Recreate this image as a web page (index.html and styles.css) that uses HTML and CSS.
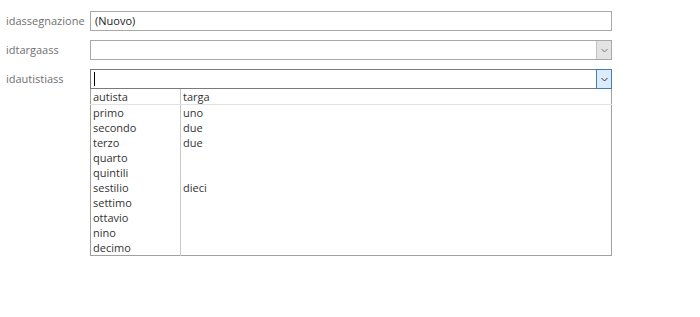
FILE: index.html
```html
<!DOCTYPE html>
<html lang="it">
<head>
    <meta charset="UTF-8">
    <title>Assegnazione</title>
    <link rel="stylesheet" href="styles.css">
</head>
<body>
    <div class="form">
        <div class="row">
            <label class="label">idassegnazione</label>
            <div class="field">(Nuovo)</div>
        </div>
        <div class="row">
            <label class="label">idtargaass</label>
            <div class="field combo">
                <span class="value"></span>
                <span class="arrow">
                    <svg width="7" height="5" viewBox="0 0 7 5"><path d="M0.5 1 L3.5 4 L6.5 1" fill="none" stroke="#777" stroke-width="1"/></svg>
                </span>
            </div>
        </div>
        <div class="row">
            <label class="label">idautistiass</label>
            <div class="picker">
                <div class="field combo focused">
                    <span class="value"><span class="caret"></span></span>
                    <span class="arrow">
                        <svg width="7" height="5" viewBox="0 0 7 5"><path d="M0.5 1 L3.5 4 L6.5 1" fill="none" stroke="#333" stroke-width="1"/></svg>
                    </span>
                </div>
                <table class="list">
                    <thead>
                        <tr><th>autista</th><th>targa</th></tr>
                    </thead>
                    <tbody>
                        <tr><td>primo</td><td>uno</td></tr>
                        <tr><td>secondo</td><td>due</td></tr>
                        <tr><td>terzo</td><td>due</td></tr>
                        <tr><td>quarto</td><td></td></tr>
                        <tr><td>quintili</td><td></td></tr>
                        <tr><td>sestilio</td><td>dieci</td></tr>
                        <tr><td>settimo</td><td></td></tr>
                        <tr><td>ottavio</td><td></td></tr>
                        <tr><td>nino</td><td></td></tr>
                        <tr><td>decimo</td><td></td></tr>
                    </tbody>
                </table>
            </div>
        </div>
    </div>
</body>
</html>
```

FILE: styles.css
```css
body {
    margin: 0;
    background: #fff;
    font-family: "Open Sans", "Noto Sans", sans-serif;
    font-size: 11px;
    color: #333;
}

.form {
    padding: 11px 0 0 6px;
    width: 606px;
}

.row {
    display: flex;
    align-items: flex-start;
    margin-bottom: 9px;
}

.label {
    width: 84px;
    flex: none;
    color: #707070;
    line-height: 20px;
}

.field {
    flex: 1;
    height: 18px;
    border: 1px solid #a8a8a8;
    line-height: 18px;
    padding-left: 4px;
    color: #222;
    display: flex;
}

.combo {
    padding-left: 0;
}

.value {
    flex: 1;
    display: flex;
    align-items: center;
    padding-left: 3px;
}

.caret {
    width: 1px;
    height: 14px;
    background: #000;
}

.arrow {
    width: 14px;
    flex: none;
    display: flex;
    align-items: center;
    justify-content: center;
    background: #e3e3e3;
    border-left: 1px solid #c4c4c4;
}

.picker {
    flex: 1;
}

.focused {
    border-color: #7a7a7a;
}

.focused .arrow {
    background: #dcecfc;
    border: 1px solid #3c7fb1;
    margin: -1px -1px -1px 0;
    height: 18px;
}

.list {
    width: 100%;
    border-collapse: collapse;
    border: 1px solid #a0a0a0;
    border-top: none;
    color: #333;
}

.list th,
.list td {
    text-align: left;
    font-weight: normal;
    padding: 0 0 0 2px;
    height: 15px;
    line-height: 15px;
}

.list th {
    border-bottom: 1px solid #e2e2e2;
}

.list th:first-child,
.list td:first-child {
    width: 87px;
    border-right: 1px solid #c8c8c8;
}
```
